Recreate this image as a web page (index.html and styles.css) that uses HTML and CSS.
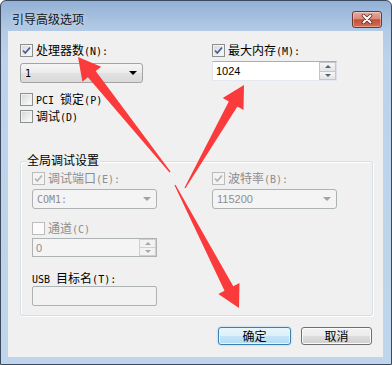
FILE: index.html
```html
<!DOCTYPE html>
<html>
<head>
<meta charset="utf-8">
<link rel="stylesheet" href="styles.css">
</head>
<body>
<div class="window">
  <div class="titlebar">
    <span class="title">引导高级选项</span>
    <button class="close" aria-label="关闭">
      <svg width="12" height="10" viewBox="0 0 12 10"><path d="M2.5 1.5 L9.5 8.5 M9.5 1.5 L2.5 8.5" stroke="#5a2a24" stroke-width="3.6" stroke-linecap="round"/><path d="M2.5 1.5 L9.5 8.5 M9.5 1.5 L2.5 8.5" stroke="#fff" stroke-width="2" stroke-linecap="round"/></svg>
    </button>
  </div>
  <div class="client">
    <div class="top">
      <div class="col col-left">
        <label class="check"><span class="box"><svg width="11" height="11" viewBox="0 0 11 11"><path d="M2 5.5 L4.3 8 L9 2.5" fill="none" stroke="#4b5d92" stroke-width="1.8"/></svg></span><span>处理器数<span class="m">(N):</span></span></label>
        <div class="combo combo-cpu"><span class="m">1</span><span class="arrow"></span></div>
        <label class="check pci"><span class="box"></span><span><span class="m">PCI </span>锁定<span class="m">(P)</span></span></label>
        <label class="check dbg"><span class="box"></span><span>调试<span class="m">(D)</span></span></label>
      </div>
      <div class="col">
        <label class="check"><span class="box"><svg width="11" height="11" viewBox="0 0 11 11"><path d="M2 5.5 L4.3 8 L9 2.5" fill="none" stroke="#4b5d92" stroke-width="1.8"/></svg></span><span>最大内存<span class="m">(M):</span></span></label>
        <div class="spinbox mem"><span class="val num">1024</span><span class="spin"><span class="sbtn"><span class="up"></span></span><span class="sbtn"><span class="down"></span></span></span></div>
      </div>
    </div>

    <div class="group">
      <div class="group-title">全局调试设置</div>
      <div class="gbody">
        <div class="gcol gleft">
          <label class="check disabled"><span class="box"><svg width="11" height="11" viewBox="0 0 11 11"><path d="M2 5.5 L4.3 8 L9 2.5" fill="none" stroke="#b4b4b4" stroke-width="1.8"/></svg></span><span>调试端口<span class="m">(E):</span></span></label>
          <div class="combo dis combo-g"><span class="m">COM1:</span><span class="arrow"></span></div>
          <label class="check disabled chan"><span class="box white"></span><span>通道<span class="m">(C)</span></span></label>
          <div class="spinbox dis chanbox"><span class="val num">0</span><span class="spin"><span class="sbtn"><span class="up"></span></span><span class="sbtn"><span class="down"></span></span></span></div>
          <div class="label usb"><span class="m">USB </span>目标名<span class="m">(T):</span></div>
          <div class="textbox dis"></div>
        </div>
        <div class="gcol">
          <label class="check disabled"><span class="box"><svg width="11" height="11" viewBox="0 0 11 11"><path d="M2 5.5 L4.3 8 L9 2.5" fill="none" stroke="#b4b4b4" stroke-width="1.8"/></svg></span><span>波特率<span class="m">(B):</span></span></label>
          <div class="combo dis combo-g"><span class="num">115200</span><span class="arrow"></span></div>
        </div>
      </div>
    </div>

    <div class="buttons">
      <button class="btn default">确定</button>
      <button class="btn">取消</button>
    </div>
  </div>
</div>
<svg class="arrows" width="392" height="365" viewBox="0 0 392 365">
  <polygon points="170.5,171.6 95.7,71.1 101.2,66.7 78,57 82.4,81.7 87.9,77.3 169.5,172.4"/>
  <polygon points="185.5,188.3 237.4,106.6 243.5,110.1 244,85 222.7,98.1 228.8,101.6 184.5,187.7"/>
  <polygon points="174.5,185.3 224.5,290.8 218.3,294.0 239,308 239.5,283.0 233.3,286.2 175.5,184.7"/>
</svg>
</body>
</html>
```
FILE: styles.css
```css
* { box-sizing: border-box; }
html, body { margin: 0; padding: 0; }
body {
  position: relative;
  width: 392px;
  height: 365px;
  overflow: hidden;
  background: #fff;
  font-family: "Noto Sans CJK SC", "Liberation Sans", sans-serif;
  font-size: 12px;
  color: #000;
}
.window {
  width: 392px;
  height: 365px;
  border: 1px solid #3b4a5c;
  border-radius: 6px 6px 0 0;
  background: linear-gradient(#93b1d5, #b3cbe6 30px, #bcd3eb 60px, #bed5ec);
  display: flex;
  flex-direction: column;
}
.titlebar {
  height: 30px;
  flex: none;
  display: flex;
  align-items: center;
  justify-content: space-between;
  padding: 6px 9px 0 11px;
}
.title {
  line-height: 14px;
  color: #151515;
  text-shadow: 0 0 6px rgba(255,255,255,.6);
}
.close {
  width: 30px;
  height: 17px;
  padding: 0;
  border: 1px solid #6b3932;
  border-radius: 3px;
  background: linear-gradient(#e8aa9c, #d98a78 45%, #c64e35 52%, #d36f55);
  box-shadow: inset 0 0 0 1px rgba(255,255,255,.35);
  display: flex;
  align-items: center;
  justify-content: center;
}
.client {
  flex: 1;
  margin: 0 8px 7px 7px;
  background: #f0f0f0;
  padding: 13px 0 0 12px;
  display: flex;
  flex-direction: column;
}
.m { font-family: "DejaVu Sans Mono", monospace; font-size: 10px; }
.num { font-family: "Liberation Sans", sans-serif; font-size: 11px; }

.top { display: flex; }
.col { display: flex; flex-direction: column; }
.col-left { width: 192px; }

.check {
  display: flex;
  align-items: center;
  height: 13px;
  gap: 3px;
  line-height: 13px;
  white-space: nowrap;
}
.box {
  width: 13px;
  height: 13px;
  flex: none;
  border: 1px solid #8e8f8f;
  background: linear-gradient(135deg, #d3d5d9, #f8f8f8 85%);
  box-shadow: inset 0 0 0 1px #f2f2f2;
  display: flex;
  align-items: center;
  justify-content: center;
}
.check.disabled { color: #8d8d8d; }
.check.disabled .box {
  border-color: #bcbcbc;
  background: #f4f4f4;
  box-shadow: none;
}
.check.disabled .box.white { background: #fbfbfb; }

.combo {
  height: 20px;
  border: 1px solid #a3a3a3;
  border-radius: 3px;
  display: flex;
  align-items: center;
  justify-content: space-between;
  padding: 0 5px 0 4px;
}
.combo-cpu {
  width: 123px;
  margin-top: 6px;
  background: linear-gradient(#f5f5f5, #ebebeb 50%, #e2e2e2 52%, #d9d9d9);
}
.arrow {
  width: 0;
  height: 0;
  border-left: 4px solid transparent;
  border-right: 4px solid transparent;
  border-top: 4px solid #000;
}
.combo.dis {
  background: #f4f4f4;
  border-color: #adb2b5;
  color: #8d8d8d;
}
.combo.dis .arrow { border-top-color: #a2a2a2; }
.combo-g { width: 125px; margin-top: 4px; }

.pci { margin-top: 10px; }
.dbg { margin-top: 4px; }

.spinbox {
  display: flex;
  border: 1px solid;
  border-color: #abadb3 #dbdfe6 #e3e9ef #e2e3ea;
  background: #fff;
}
.spinbox .val {
  flex: 1;
  padding-left: 3px;
  display: flex;
  align-items: center;
}
.mem { width: 125px; height: 20px; margin-top: 4px; }
.spin {
  width: 17px;
  display: flex;
  flex-direction: column;
  gap: 0;
}
.sbtn {
  flex: 1;
  border: 1px solid #c4c6cb;
  background: linear-gradient(#f6f6f6, #e4e4e4);
  display: flex;
  align-items: center;
  justify-content: center;
}
.sbtn + .sbtn { border-top: none; }
.up, .down {
  width: 0;
  height: 0;
  border-left: 3px solid transparent;
  border-right: 3px solid transparent;
}
.up { border-bottom: 3px solid #4d6185; }
.down { border-top: 3px solid #4d6185; }
.spinbox.dis {
  background: #f4f4f4;
  border-color: #adb2b5;
  color: #8d8d8d;
}
.spinbox.dis .sbtn { border-color: #d0d0d0; background: #f2f2f2; }
.spinbox.dis .up { border-bottom-color: #a8a8a8; }
.spinbox.dis .down { border-top-color: #a8a8a8; }

.group {
  margin-top: 38px;
  width: 353px;
  border: 1px solid #d5dfe5;
  border-radius: 3px;
  padding: 0 11px 9px 11px;
  box-shadow: inset 1px 1px 0 #fff, 1px 1px 0 #fff;
}
.group-title {
  width: fit-content;
  margin: -9px 0 0 -6px;
  padding: 0 1px;
  background: #f0f0f0;
  line-height: 13px;
  height: 13px;
}
.gbody { display: flex; margin-top: 6px; }
.gcol { display: flex; flex-direction: column; }
.gleft { width: 180px; }
.chan { margin-top: 13px; }
.chanbox { width: 125px; height: 19px; margin-top: 3px; }
.label { line-height: 13px; height: 13px; white-space: nowrap; }
.usb { margin-top: 14px; }
.textbox {
  width: 125px;
  height: 20px;
  margin-top: 2px;
  border: 1px solid #adb2b5;
  border-radius: 2px;
  background: #f2f2f2;
}

.buttons {
  display: flex;
  justify-content: flex-end;
  gap: 10px;
  padding-right: 11px;
  margin-top: 11px;
}
.btn {
  width: 71px;
  height: 18px;
  padding: 0;
  font: inherit;
  line-height: 16px;
  color: #000;
  border: 1px solid #707070;
  border-radius: 3px;
  background: linear-gradient(#f2f2f2, #ebebeb 50%, #dddddd 51%, #cfcfcf);
  box-shadow: inset 0 0 0 1px #fbfbfb;
}
.btn.default {
  width: 73px;
  border-color: #3c7fb1;
  background: linear-gradient(#e9f5fc, #dcf0fb 50%, #c4e5f7 51%, #b2dbf3);
  box-shadow: inset 0 0 0 1px #e6f4fc, 0 0 2px #8fc7ef;
}

.arrows {
  position: absolute;
  left: 0;
  top: 0;
  pointer-events: none;
  fill: #fb3b3b;
}
```
